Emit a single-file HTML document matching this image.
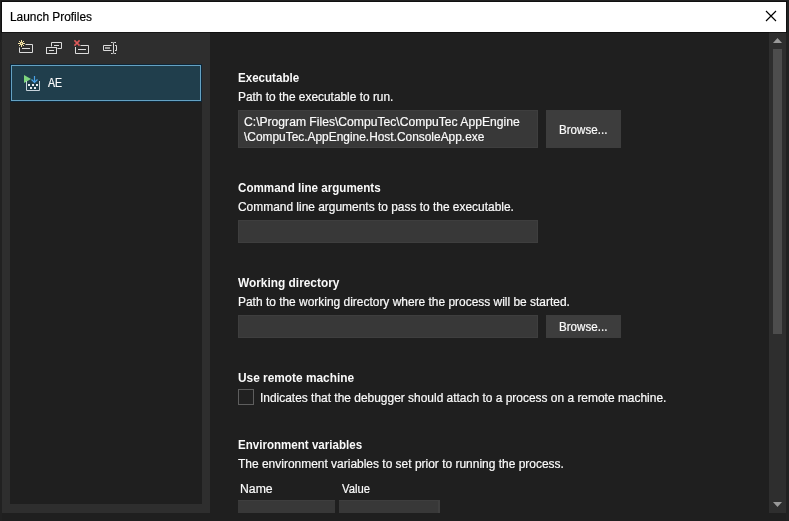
<!DOCTYPE html>
<html lang="en"><head><meta charset="utf-8"><title>Launch Profiles</title>
<style>
html,body{margin:0;padding:0}
body{width:789px;height:521px;overflow:hidden;background:#212121;position:relative;font-family:"Liberation Sans",sans-serif;font-size:12px;color:#fafafa}
.a{position:absolute}
.t{position:absolute;white-space:pre;line-height:12px;font-size:12px;transform-origin:0 0;-webkit-text-stroke:0.2px currentColor}
.t[style*="font-weight:700"]{-webkit-text-stroke:0}
#win{left:2px;top:2px;width:784px;height:519px;background:#1f1f1f}
#title{left:2px;top:2px;width:784px;height:30px;background:#fff;box-shadow:0 0 0 1px rgba(0,0,0,.5)}
#side{left:2px;top:32px;width:208px;height:481px;background:#2e2e2e}
#list{left:10px;top:64px;width:192px;height:440px;background:#1f1f1f}
#sel{left:11px;top:65px;width:188px;height:34px;background:#203e4c;border:1px solid #64a2c3;box-shadow:0 0 0 1px #0d2638}
.in{background:#383838;box-shadow:inset 0 0 0 1px #3e3e3e}
.btn{background:#3d3d3d}
#track{left:769px;top:32px;width:17px;height:481px;background:#2e2e2e}
#thumb{left:773px;top:49px;width:9px;height:285px;background:#4d4d4d}
#bottom{left:2px;top:513px;width:784px;height:8px;background:#1f1f1f}
#cb{left:238px;top:389px;width:14px;height:14px;border:1px solid #5e5e5e;background:#212121}
svg{position:absolute;overflow:visible}
</style></head><body>
<div class="a" id="win"></div>
<div class="a" id="side"></div>
<div class="a" id="list"></div>
<div class="a" id="sel"></div>
<div class="a" id="track"></div>
<div class="a" id="thumb"></div>
<div class="a" id="bottom"></div>
<div class="a" id="title"></div>
<div class="a in" style="left:238px;top:110px;width:300px;height:38px"></div>
<div class="a btn" style="left:546px;top:110px;width:75px;height:38px"></div>
<div class="a in" style="left:238px;top:220px;width:300px;height:23px"></div>
<div class="a in" style="left:238px;top:315px;width:300px;height:23px"></div>
<div class="a btn" style="left:546px;top:315px;width:75px;height:23px"></div>
<div class="a" id="cb"></div>
<div class="a in" style="left:238px;top:500px;width:97px;height:13px;box-shadow:inset 0 1px 0 #3e3e3e"></div>
<div class="a in" style="left:339px;top:500px;width:101px;height:13px;box-shadow:inset 0 1px 0 #3e3e3e,inset -2px 0 0 #3f3f3f"></div>
<!-- close X -->
<svg style="left:766px;top:11px" width="10" height="10" viewBox="0 0 10 10"><path d="M0 0L10 10M10 0L0 10" stroke="#000" stroke-width="1.15" fill="none"/></svg>
<!-- scroll arrows -->
<svg style="left:773px;top:38px" width="9" height="5" viewBox="0 0 9 5"><path d="M4.5 0L9 5H0Z" fill="#999"/></svg>
<svg style="left:773px;top:502px" width="9" height="5" viewBox="0 0 9 5"><path d="M0 0H9L4.5 5Z" fill="#999"/></svg>
<!-- toolbar icons -->
<svg style="left:17px;top:39px" width="18" height="16" viewBox="17 39 18 16" fill="none" stroke="#dcdcdc" stroke-width="1">
 <path d="M25.5 44.5H32.5V52.5H19.5V47.5"/><path d="M22 48.5H30"/>
 <g stroke="#f0e0a4"><path d="M21.5 40V47M18 43.5H25M19 41L24 46M24 41L19 46"/></g><rect x="21" y="43" width="1" height="1" fill="#6b6243" stroke="none"/>
</svg>
<svg style="left:45px;top:41px" width="18" height="14" viewBox="45 41 18 14" fill="none" stroke="#dcdcdc" stroke-width="1">
 <path d="M51.5 46.5V42.5H61.5V48.5H57.5"/><path d="M54 45.5H59"/>
 <rect x="46.5" y="47.5" width="10" height="6"/><path d="M49 50.5H54"/>
</svg>
<svg style="left:73px;top:39px" width="18" height="16" viewBox="73 39 18 16" fill="none" stroke="#dcdcdc" stroke-width="1">
 <path d="M80.5 45.5H88.5V53.5H75.5V47"/><path d="M78 49.5H86"/>
 <g stroke="#e05a5a" stroke-width="1.5"><path d="M74.4 40.4L79.6 45.6M79.6 40.4L74.4 45.6"/></g>
</svg>
<svg style="left:102px;top:41px" width="16" height="14" viewBox="102 41 16 14" fill="none" stroke="#dcdcdc" stroke-width="1">
 <path d="M111.5 45.5H103.5V50.5H111.5"/><path d="M115 45.5H116.5V50.5H115"/><path d="M105 48H110" stroke-width="2" stroke="#a0a0a0"/>
 <path d="M111 42.5H112.5Q113.5 42.5 113.5 43.5V52.5Q113.5 53.5 112.5 53.5H111M116 42.5H114.5Q113.5 42.5 113.5 43.5M113.5 52.5Q113.5 53.5 114.5 53.5H116"/>
</svg>
<!-- AE icon -->
<svg style="left:23px;top:74px" width="18" height="18" viewBox="23 74 18 18" fill="none">
 <path d="M24 75L31 79L24 83Z" fill="#7ed67e"/>
 <path d="M34.5 76V82M31.5 79.5L34.5 82.5L37.5 79.5" stroke="#4aa3e8" stroke-width="1.2"/>
 <path d="M26.5 81V90.5H39.500V81" stroke="#c8d4dc" stroke-width="1"/>
 <g fill="#e8eef3"><rect x="28" y="84" width="2" height="2"/><rect x="32" y="84" width="2" height="2"/><rect x="36" y="84" width="2" height="2"/><rect x="30" y="87" width="2" height="2"/><rect x="34" y="87" width="2" height="2"/></g>
</svg>
<div id="tx" style="position:absolute;left:0;top:0;width:789px;height:521px;will-change:transform">
<span class="t" style="left:9.50px;top:10.84px;color:#000;transform:scaleX(0.9908)">Launch Profiles</span>
<span class="t" style="left:48.20px;top:76.84px;transform:scaleX(0.8808)">AE</span>
<span class="t" style="left:238.15px;top:71.84px;font-weight:700;transform:scaleX(0.9647)">Executable</span>
<span class="t" style="left:237.90px;top:90.84px;transform:scaleX(0.9913)">Path to the executable to run.</span>
<span class="t" style="left:244.10px;top:115.84px;transform:scaleX(1.0105)">C:\Program Files\CompuTec\CompuTec AppEngine</span>
<span class="t" style="left:244.40px;top:130.84px;transform:scaleX(0.9926)">\CompuTec.AppEngine.Host.ConsoleApp.exe</span>
<span class="t" style="left:559.40px;top:123.84px;transform:scaleX(0.9667)">Browse...</span>
<span class="t" style="left:237.90px;top:181.84px;font-weight:700;transform:scaleX(0.9679)">Command line arguments</span>
<span class="t" style="left:238.10px;top:200.84px;transform:scaleX(0.9942)">Command line arguments to pass to the executable.</span>
<span class="t" style="left:238.40px;top:276.84px;font-weight:700;transform:scaleX(0.9898)">Working directory</span>
<span class="t" style="left:237.90px;top:295.84px;transform:scaleX(0.9952)">Path to the working directory where the process will be started.</span>
<span class="t" style="left:559.40px;top:320.84px;transform:scaleX(0.9667)">Browse...</span>
<span class="t" style="left:238.15px;top:371.84px;font-weight:700;transform:scaleX(0.9884)">Use remote machine</span>
<span class="t" style="left:259.60px;top:391.84px;transform:scaleX(0.9953)">Indicates that the debugger should attach to a process on a remote machine.</span>
<span class="t" style="left:238.15px;top:438.84px;font-weight:700;transform:scaleX(0.9643)">Environment variables</span>
<span class="t" style="left:238.15px;top:457.84px;transform:scaleX(0.9971)">The environment variables to set prior to running the process.</span>
<span class="t" style="left:239.60px;top:482.84px;transform:scaleX(1.0197)">Name</span>
<span class="t" style="left:341.50px;top:482.84px;transform:scaleX(0.9385)">Value</span>
</div>
</body></html>
